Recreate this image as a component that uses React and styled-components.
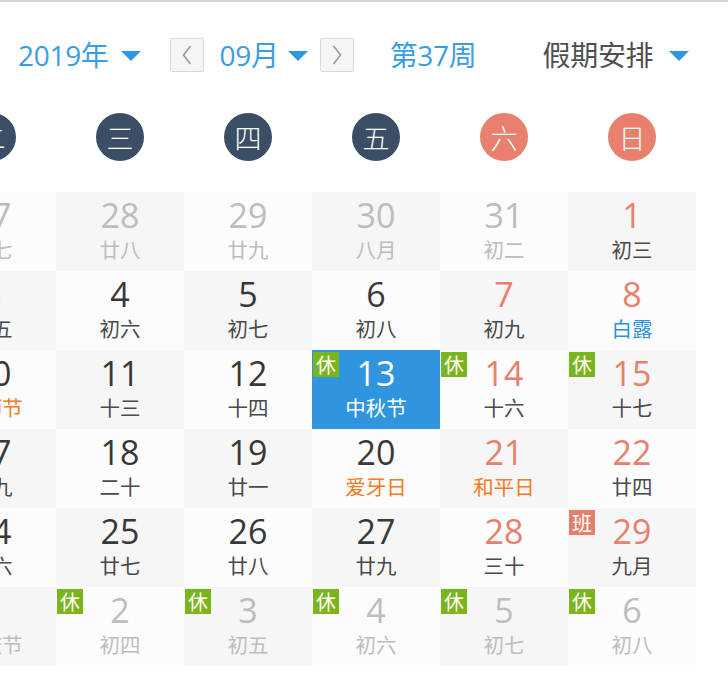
import React from "react";
import styled, { createGlobalStyle } from "styled-components";

const Global = createGlobalStyle`
  html, body { margin: 0; padding: 0; background: #fff; }
  body {
    font-family: "Open Sans", "Noto Sans CJK SC", sans-serif;
    overflow: hidden;
  }
`;

const Viewport = styled.div`
  width: 728px;
  height: 698px;
  overflow: hidden;
  border-top: 2px solid #d3d3d3;
  box-sizing: border-box;
`;

const Header = styled.div`
  height: 104px;
  display: flex;
  align-items: center;
  padding-left: 18px;
  padding-top: 2px;
  box-sizing: border-box;
`;

const Select = styled.div`
  display: flex;
  align-items: center;
  gap: ${(p) => p.$gap}px;
  margin-left: ${(p) => p.$ml || 0}px;
  font-size: 28px;
  line-height: 36px;
  color: ${(p) => p.$color || "#3a9de3"};
  letter-spacing: -0.3px;
`;

const Caret = styled.span`
  width: 0;
  height: 0;
  border-left: 10px solid transparent;
  border-right: 10px solid transparent;
  border-top: 10px solid #2f97df;
  margin-top: 2px;
`;

const NavButton = styled.div`
  width: 34px;
  height: 34px;
  box-sizing: border-box;
  border: 1px solid #d9d9d9;
  background: #f5f5f5;
  border-radius: 2px;
  display: flex;
  align-items: center;
  justify-content: center;
  margin-left: ${(p) => p.$ml}px;
`;

const WeekLabel = styled.div`
  margin-left: ${(p) => p.$ml}px;
  font-size: 28px;
  line-height: 36px;
  color: #3a9de3;
  letter-spacing: -0.3px;
`;

const Board = styled.div`
  margin-left: -200px;
  width: 896px;
`;

const WeekRow = styled.div`
  display: grid;
  grid-template-columns: repeat(7, 128px);
  height: 86px;
  padding-top: 7px;
  box-sizing: border-box;
`;

const WeekCell = styled.div`
  display: flex;
  justify-content: center;
`;

const Circle = styled.div`
  width: 48px;
  height: 48px;
  border-radius: 50%;
  background: ${(p) => (p.$weekend ? "#e9806d" : "#3a4f66")};
  color: #fff;
  font-family: "Noto Sans CJK SC", sans-serif;
  font-weight: 300;
  font-size: 27px;
  display: flex;
  align-items: center;
  justify-content: center;
`;

const Grid = styled.div`
  display: grid;
  grid-template-columns: repeat(7, 128px);
  grid-auto-rows: 79px;
`;

const Cell = styled.div`
  position: relative;
  background: ${(p) => (p.$selected ? "#2e95de" : p.$shade ? "#f6f6f6" : "#fcfcfc")};
  display: flex;
  flex-direction: column;
  align-items: center;
  padding-top: 3px;
  box-sizing: border-box;
`;

const DayNum = styled.div`
  font-size: 34px;
  line-height: 40px;
  color: ${(p) => p.$color};
`;

const Lunar = styled.div`
  font-family: "Noto Sans CJK SC", sans-serif;
  font-size: 20.5px;
  line-height: 28px;
  color: ${(p) => p.$color};
`;

const Badge = styled.span`
  position: absolute;
  left: 1px;
  top: 2px;
  width: 26px;
  height: 25px;
  background: ${(p) => (p.$work ? "#e47f6b" : "#7bb51c")};
  color: #fff;
  font-family: "Noto Sans CJK SC", sans-serif;
  font-size: 20px;
  line-height: 25px;
  text-align: center;
`;

const Chevron = ({ dir }) => (
  <svg width="14" height="24" viewBox="0 0 14 24">
    <path
      d={dir === "left" ? "M10.5 3 L3.5 12 L10.5 21" : "M3.5 3 L10.5 12 L3.5 21"}
      fill="none"
      stroke="#9a9a9a"
      strokeWidth="1.6"
      strokeLinejoin="miter"
    />
  </svg>
);

const weekdays = ["一", "二", "三", "四", "五", "六", "日"];

const c = (d, l, extra = {}) => ({ d, l, ...extra });

const weeks = [
  [c(26, "廿六", { o: 1 }), c(27, "廿七", { o: 1 }), c(28, "廿八", { o: 1 }), c(29, "廿九", { o: 1 }), c(30, "八月", { o: 1 }), c(31, "初二", { o: 1 }), c(1, "初三")],
  [c(2, "初四"), c(3, "初五"), c(4, "初六"), c(5, "初七"), c(6, "初八"), c(7, "初九"), c(8, "白露", { t: "term" })],
  [c(9, "十一"), c(10, "教师节", { t: "fest" }), c(11, "十三"), c(12, "十四"), c(13, "中秋节", { sel: 1, b: "休" }), c(14, "十六", { b: "休" }), c(15, "十七", { b: "休" })],
  [c(16, "十八"), c(17, "十九"), c(18, "二十"), c(19, "廿一"), c(20, "爱牙日", { t: "fest" }), c(21, "和平日", { t: "fest" }), c(22, "廿四")],
  [c(23, "秋分", { t: "term" }), c(24, "廿六"), c(25, "廿七"), c(26, "廿八"), c(27, "廿九"), c(28, "三十"), c(29, "九月", { b: "班" })],
  [c(30, "初二"), c(1, "国庆节", { o: 1, b: "休" }), c(2, "初四", { o: 1, b: "休" }), c(3, "初五", { o: 1, b: "休" }), c(4, "初六", { o: 1, b: "休" }), c(5, "初七", { o: 1, b: "休" }), c(6, "初八", { o: 1, b: "休" })],
];

function numColor(cell, col) {
  if (cell.sel) return "#fff";
  if (cell.o) return "#bdbdbd";
  if (col >= 5) return "#e8806d";
  return "#383838";
}

function lunarColor(cell) {
  if (cell.sel) return "#fff";
  if (cell.o) return "#bdbdbd";
  if (cell.t === "fest") return "#f27a1f";
  if (cell.t === "term") return "#2d93dc";
  return "#4a4a4a";
}

export default function App() {
  return (
    <>
      <Global />
      <Viewport>
        <Header>
          <Select $gap={12}>
            <span>2019年</span>
            <Caret />
          </Select>
          <NavButton $ml={29}>
            <Chevron dir="left" />
          </NavButton>
          <Select $gap={9} $ml={16}>
            <span>09月</span>
            <Caret />
          </Select>
          <NavButton $ml={12}>
            <Chevron dir="right" />
          </NavButton>
          <WeekLabel $ml={36}>第37周</WeekLabel>
          <Select $gap={16} $ml={66} $color="#4f4f4f">
            <span>假期安排</span>
            <Caret />
          </Select>
        </Header>
        <Board>
          <WeekRow>
            {weekdays.map((w, i) => (
              <WeekCell key={w}>
                <Circle $weekend={i >= 5}>{w}</Circle>
              </WeekCell>
            ))}
          </WeekRow>
          <Grid>
            {weeks.map((row, r) =>
              row.map((cell, col) => (
                <Cell key={`${r}-${col}`} $shade={(r + col) % 2 === 0} $selected={!!cell.sel}>
                  {cell.b && <Badge $work={cell.b === "班"}>{cell.b}</Badge>}
                  <DayNum $color={numColor(cell, col)}>{cell.d}</DayNum>
                  <Lunar $color={lunarColor(cell)}>{cell.l}</Lunar>
                </Cell>
              ))
            )}
          </Grid>
        </Board>
      </Viewport>
    </>
  );
}
